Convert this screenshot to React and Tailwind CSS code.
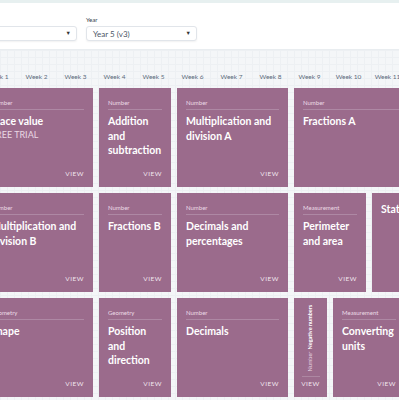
import React from "react";

const rows = [
  [
    { span: "col-span-3", label: "Number", title: "Place value", trial: true },
    { span: "col-span-2", label: "Number", title: "Addition and subtraction" },
    { span: "col-span-3", label: "Number", title: "Multiplication and division A" },
    { span: "col-span-4", label: "Number", title: "Fractions A", noView: true },
  ],
  [
    { span: "col-span-3", label: "Number", title: "Multiplication and division B" },
    { span: "col-span-2", label: "Number", title: "Fractions B" },
    { span: "col-span-3", label: "Number", title: "Decimals and percentages" },
    { span: "col-span-2", label: "Measurement", title: "Perimeter and area" },
    { span: "col-span-2", title: "Statistics", bare: true },
  ],
  [
    { span: "col-span-3", label: "Geometry", title: "Shape" },
    { span: "col-span-2", label: "Geometry", title: "Position and direction" },
    { span: "col-span-3", label: "Number", title: "Decimals" },
    { span: "col-span-1", label: "Number", title: "Negative numbers", narrow: true },
    { span: "col-span-2", label: "Measurement", title: "Converting units" },
  ],
];

const weeks = Array.from({ length: 12 }, (_, i) => `Week ${i + 1}`);

function Select({ label, value }) {
  return (
    <div className="w-[111px] shrink-0">
      <div className="text-[6px] leading-[8px] text-[#2f3b48] mb-[2px] h-[8px]">{label}</div>
      <div className="h-[15px] rounded-[3px] border border-[#e1e5ea] bg-white shadow-[0_1px_2px_rgba(0,0,0,0.06)] flex items-center justify-between pl-[6px] pr-[5px]">
        <span className="text-[8px] text-[#4a5666]">{value}</span>
        <span className="text-[5.5px] text-[#333]">▼</span>
      </div>
    </div>
  );
}

function Card({ card }) {
  if (card.narrow) {
    return (
      <div className={`${card.span} h-[99px] bg-[#9b6b8c] flex flex-col items-center pb-[9px] text-white`}>
        <div className="mt-auto flex rotate-180 [writing-mode:vertical-rl] gap-[2px] whitespace-nowrap">
          <span className="text-[5.5px] leading-[7px] text-[#ead9e4]">{card.label}</span>
          <span className="text-[5.5px] leading-[7px] font-bold">{card.title}</span>
        </div>
        <div className="w-[18px] border-t border-[#ad87a2] mt-[5px] mb-[3px]" />
        <span className="text-[6.5px] leading-[8px] tracking-[0.5px] text-[#f1e6ee]">VIEW</span>
      </div>
    );
  }
  return (
    <div className={`${card.span} h-[99px] bg-[#9b6b8c] flex flex-col px-[9px] pt-[11px] pb-[9px] text-white`}>
      {card.bare ? (
        <div className="text-[10.5px] leading-[14px] font-bold -mt-[2px]">{card.title}</div>
      ) : (
        <>
          <div className="text-[6px] leading-[8px] text-[#ecdbe6] pb-[2px] border-b border-[#ae88a4]">{card.label}</div>
          <div className="mt-[4px] text-[10.5px] leading-[14.5px] font-bold">{card.title}</div>
          {card.trial && <div className="text-[9px] leading-[11px] text-[#ead8e4]">FREE TRIAL</div>}
          {!card.noView && (
            <div className="mt-auto self-end text-[6.5px] leading-[8px] tracking-[0.5px] text-[#f1e6ee]">VIEW</div>
          )}
        </>
      )}
    </div>
  );
}

export default function App() {
  return (
    <div className="w-[399px] h-[400px] overflow-hidden bg-white font-['Lato',sans-serif]">
      <div className="h-[3px] bg-[#e7f0f0]" />
      <div className="h-[47px] bg-white flex gap-[9px] -ml-[34px] pt-[13px] border-b border-[#e9edf0]">
        <Select label="Subject" value="" />
        <Select label="Year" value="Year 5 (v3)" />
      </div>
      <div className="h-[350px] bg-[#f4f6f8] bg-[linear-gradient(to_right,#edf0f3_1px,transparent_1px),linear-gradient(to_bottom,#edf0f3_1px,transparent_1px)] bg-[size:7px_7px]">
        <div className="-ml-[18px] w-[462px]">
          <div className="grid grid-cols-[repeat(12,33px)] gap-x-[6px] h-[38px] items-end pb-[7px]">
            {weeks.map(w => (
              <div key={w} className="text-center text-[6.5px] leading-[8px] text-[#5b6b7c] -translate-x-[1px]">{w}</div>
            ))}
          </div>
          <div className="flex flex-col gap-[6px]">
            {rows.map((row, i) => (
              <div key={i} className="grid grid-cols-[repeat(12,33px)] gap-x-[6px]">
                {row.map((card, j) => <Card key={j} card={card} />)}
              </div>
            ))}
          </div>
        </div>
      </div>
    </div>
  );
}
